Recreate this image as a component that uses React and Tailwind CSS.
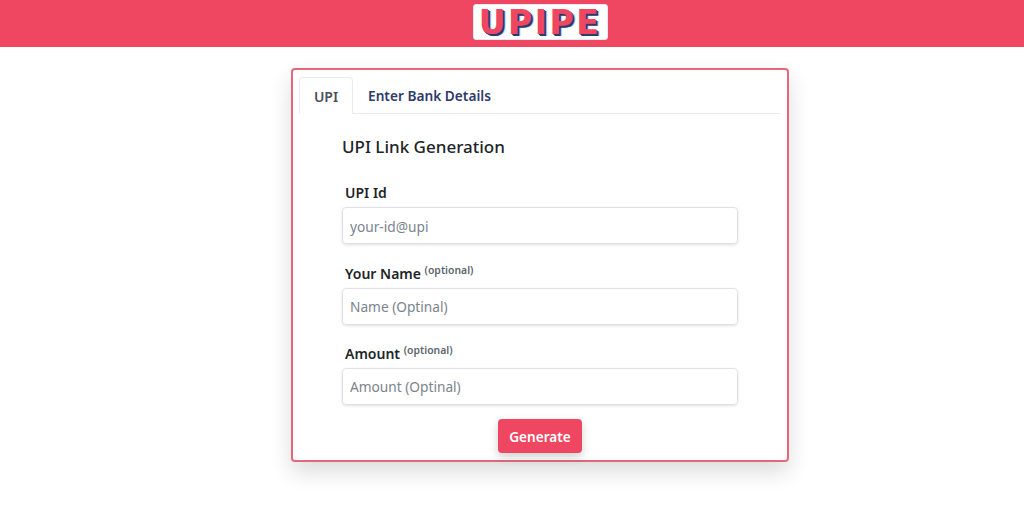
export default function App() {
  return (
    <div className="min-h-[512px] bg-white font-['Noto_Sans',sans-serif] overflow-hidden">
      <header className="h-[47px] bg-[#ef4662] flex justify-center items-start pt-[4px] pl-[56px]">
        <div className="w-[135px] h-[36px] bg-white border border-[#dfe9f5] rounded-[3px] flex items-center justify-center">
          <span className="font-['DejaVu_Sans',sans-serif] font-bold text-[33px] leading-none tracking-[2.5px] text-[#ef4662] [text-shadow:1px_1px_0_#2f3a6b,2px_2px_0_#2f3a6b,3px_2px_1px_#a9c4e4]">
            UPIPE
          </span>
        </div>
      </header>

      <div className="flex justify-center pt-[21px] pl-[56px]">
        <div className="w-[498px] h-[394px] border-2 border-[#e5677b] rounded-[4px] shadow-[0_10px_22px_rgba(0,0,0,0.14)] pt-[7px] pl-[6px] pr-[7px]">
          <div className="flex h-[37px] border-b border-[#e9ecef]">
            <div className="w-[54px] h-[37px] pt-[1px] border border-[#e9ecef] border-b-white rounded-t-[4px] bg-white flex items-center justify-center text-[14px] font-semibold text-[#495057]">
              UPI
            </div>
            <div className="px-[15px] pt-[2px] flex items-center text-[13.7px] font-semibold text-[#2f3a6b]">
              Enter Bank Details
            </div>
          </div>

          <div className="w-[396px] ml-[43px]">
            <h2 className="mt-[21px] text-[17px] leading-[24px] font-medium text-[#212529]">UPI Link Generation</h2>

            <label className="block mt-[24px] ml-[3px] text-[14px] leading-[19px] font-semibold text-[#212529]">UPI Id</label>
            <input
              placeholder="your-id@upi"
              className="block mt-[5px] w-full h-[37px] px-[7px] pt-[2px] text-[13.7px] border border-[#dee2e6] rounded-[4px] shadow-[0_1px_3px_rgba(0,0,0,0.12)] outline-none placeholder:text-[#7b848c]"
            />

            <label className="block mt-[18px] ml-[3px] h-[26px] text-[14px] leading-[24px] font-semibold text-[#212529]">
              Your Name <sup className="text-[10.4px] font-semibold text-[#5c6670] top-[-5px]">(optional)</sup>
            </label>
            <input
              placeholder="Name (Optinal)"
              className="block w-full h-[37px] px-[7px] text-[13.7px] border border-[#dee2e6] rounded-[4px] shadow-[0_1px_3px_rgba(0,0,0,0.12)] outline-none placeholder:text-[#7b848c]"
            />

            <label className="block mt-[17px] ml-[3px] h-[26px] text-[14px] leading-[24px] font-semibold text-[#212529]">
              Amount <sup className="text-[10.4px] font-semibold text-[#5c6670] top-[-5px]">(optional)</sup>
            </label>
            <input
              placeholder="Amount (Optinal)"
              className="block w-full h-[37px] px-[7px] text-[13.7px] border border-[#dee2e6] rounded-[4px] shadow-[0_1px_3px_rgba(0,0,0,0.12)] outline-none placeholder:text-[#7b848c]"
            />

            <div className="flex justify-center mt-[14px]">
              <button className="w-[84px] h-[34px] pt-[2px] bg-[#ef4662] text-white text-[13.6px] font-semibold rounded-[4px] shadow-[0_4px_10px_rgba(0,0,0,0.18)]">
                Generate
              </button>
            </div>
          </div>
        </div>
      </div>
    </div>
  )
}
